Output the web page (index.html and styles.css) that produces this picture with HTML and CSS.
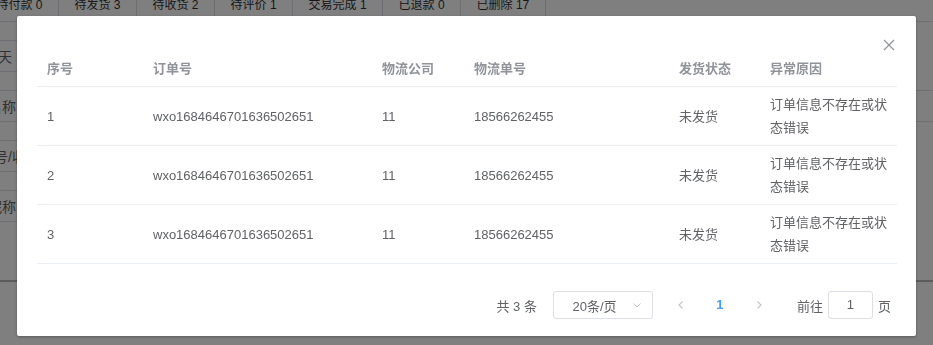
FILE: index.html
```html
<!DOCTYPE html>
<html lang="zh-CN">
<head>
    <meta charset="UTF-8">
    <meta name="viewport" content="width=device-width, initial-scale=1.0">
    <title>异常订单</title>
    <link rel="stylesheet" href="styles.css">
</head>
<body>
    <div class="page">
        <div class="tabs">
            <div class="tab">待付款 0</div>
            <div class="tab">待发货 3</div>
            <div class="tab">待收货 2</div>
            <div class="tab">待评价 1</div>
            <div class="tab">交易完成 1</div>
            <div class="tab">已退款 0</div>
            <div class="tab">已删除 17</div>
        </div>
        <div class="filters">
            <div class="filter-row short"><span class="filter-label w12">最近7天</span></div>
            <div class="filter-row"><span class="filter-label w16">商品名称</span></div>
            <div class="filter-row short"><span class="filter-label w26">订单号/收</span></div>
            <div class="filter-row short"><span class="filter-label w16">买家昵称</span></div>
        </div>
        <div class="list-head"></div>
    </div>

    <div class="mask">
        <div class="dialog">
            <div class="dialog-header">
                <button class="dialog-close" aria-label="关闭">
                    <svg width="16" height="16" viewBox="0 0 16 16">
                        <path d="M3 3 L13 13 M13 3 L3 13" stroke="#909399" stroke-width="1.2" fill="none"/>
                    </svg>
                </button>
            </div>
            <div class="dialog-body">
                <table class="data-table">
                    <colgroup>
                        <col style="width: 106px">
                        <col style="width: 229px">
                        <col style="width: 92px">
                        <col style="width: 205px">
                        <col style="width: 91px">
                        <col style="width: 137px">
                    </colgroup>
                    <thead>
                        <tr>
                            <th>序号</th>
                            <th>订单号</th>
                            <th>物流公司</th>
                            <th>物流单号</th>
                            <th>发货状态</th>
                            <th>异常原因</th>
                        </tr>
                    </thead>
                    <tbody>
                        <tr>
                            <td>1</td>
                            <td>wxo1684646701636502651</td>
                            <td>11</td>
                            <td>18566262455</td>
                            <td>未发货</td>
                            <td>订单信息不存在或状态错误</td>
                        </tr>
                        <tr>
                            <td>2</td>
                            <td>wxo1684646701636502651</td>
                            <td>11</td>
                            <td>18566262455</td>
                            <td>未发货</td>
                            <td>订单信息不存在或状态错误</td>
                        </tr>
                        <tr>
                            <td>3</td>
                            <td>wxo1684646701636502651</td>
                            <td>11</td>
                            <td>18566262455</td>
                            <td>未发货</td>
                            <td>订单信息不存在或状态错误</td>
                        </tr>
                    </tbody>
                </table>

                <div class="pagination">
                    <span class="total">共 3 条</span>
                    <div class="sizes">
                        <span>20条/页</span>
                        <svg class="sizes-arrow" width="10" height="10" viewBox="0 0 10 10">
                            <path d="M1.5 3.5 L5 7 L8.5 3.5" stroke="#c0c4cc" stroke-width="1" fill="none"/>
                        </svg>
                    </div>
                    <button class="page-btn" disabled>
                        <svg width="10" height="10" viewBox="0 0 10 10">
                            <path d="M6.5 1.5 L3 5 L6.5 8.5" stroke="#c0c4cc" stroke-width="1.1" fill="none"/>
                        </svg>
                    </button>
                    <span class="pager active">1</span>
                    <button class="page-btn" disabled>
                        <svg width="10" height="10" viewBox="0 0 10 10">
                            <path d="M3.5 1.5 L7 5 L3.5 8.5" stroke="#c0c4cc" stroke-width="1.1" fill="none"/>
                        </svg>
                    </button>
                    <span class="jump">前往<span class="jump-input">1</span>页</span>
                </div>
            </div>
        </div>
    </div>
</body>
</html>
```

FILE: styles.css
```css
* {
    margin: 0;
    padding: 0;
    box-sizing: border-box;
}

body {
    font-family: "Liberation Sans", "Noto Sans CJK SC", sans-serif;
    background: #fff;
    color: #606266;
    overflow: hidden;
}

/* page behind the dialog */
.page {
    width: 933px;
    height: 345px;
}

.tabs {
    display: flex;
    height: 22px;
    margin-left: -19px;
    border-bottom: 1px solid #dcdfe6;
}

.tab {
    padding: 0 15.5px;
    line-height: 10px;
    font-size: 12px;
    color: #303133;
    border-right: 1px solid #dcdfe6;
    white-space: nowrap;
}

.filters {
    padding-top: 18px;
}

.filter-row {
    display: flex;
    align-items: center;
    height: 32px;
    margin-bottom: 18px;
    border-top: 1px solid #dcdfe6;
    border-bottom: 1px solid #dcdfe6;
}

.filter-row.short {
    width: 600px;
}

.filter-label {
    display: flex;
    justify-content: flex-end;
    white-space: nowrap;
    font-size: 14px;
    color: #606266;
}

.w12 { width: 12px; }
.w16 { width: 16px; }
.w26 { width: 26px; }

.list-head {
    margin-top: 58px;
    border-top: 2px solid #b4b6ba;
}

/* dialog */
.mask {
    position: fixed;
    inset: 0;
    background: rgba(0, 0, 0, 0.5);
}

.dialog {
    width: 899px;
    margin: 16px auto 0;
    background: #fff;
    border-radius: 2px;
    box-shadow: 0 1px 3px rgba(0, 0, 0, 0.3);
}

.dialog-header {
    display: flex;
    justify-content: flex-end;
    height: 35px;
    padding: 21px 19px 0 0;
}

.dialog-close {
    width: 16px;
    height: 16px;
    border: none;
    background: none;
    display: flex;
}

.dialog-body {
    padding: 0 20px 15px;
}

.data-table {
    width: 860px;
    border-collapse: collapse;
    table-layout: fixed;
    font-size: 13px;
}

.data-table th,
.data-table td {
    padding: 6px 10px;
    line-height: 23px;
    text-align: left;
    vertical-align: middle;
    border-bottom: 1px solid #ebeef5;
}

.data-table th {
    color: #909399;
    font-weight: bold;
}

.data-table td {
    color: #606266;
}

.pagination {
    display: flex;
    justify-content: flex-end;
    align-items: center;
    margin-top: 25px;
    padding: 2px 5px;
    font-size: 13px;
    color: #606266;
}

.total {
    margin-right: 16px;
    white-space: nowrap;
}

.sizes {
    display: flex;
    align-items: center;
    justify-content: center;
    position: relative;
    width: 100px;
    height: 28px;
    margin-right: 10px;
    padding: 0 25px 0 8px;
    border: 1px solid #dcdfe6;
    border-radius: 3px;
}

.sizes-arrow {
    position: absolute;
    right: 10px;
    top: 8px;
}

.page-btn {
    display: flex;
    align-items: center;
    justify-content: center;
    width: 36px;
    height: 28px;
    border: none;
    background: #fff;
}

.pager {
    width: 42px;
    height: 28px;
    line-height: 28px;
    text-align: center;
}

.pager.active {
    color: #409eff;
    font-weight: bold;
}

.jump {
    display: flex;
    align-items: center;
    margin-left: 20px;
    white-space: nowrap;
}

.jump-input {
    width: 45px;
    height: 28px;
    line-height: 26px;
    margin: 0 5px;
    text-align: center;
    border: 1px solid #dcdfe6;
    border-radius: 3px;
}
```
